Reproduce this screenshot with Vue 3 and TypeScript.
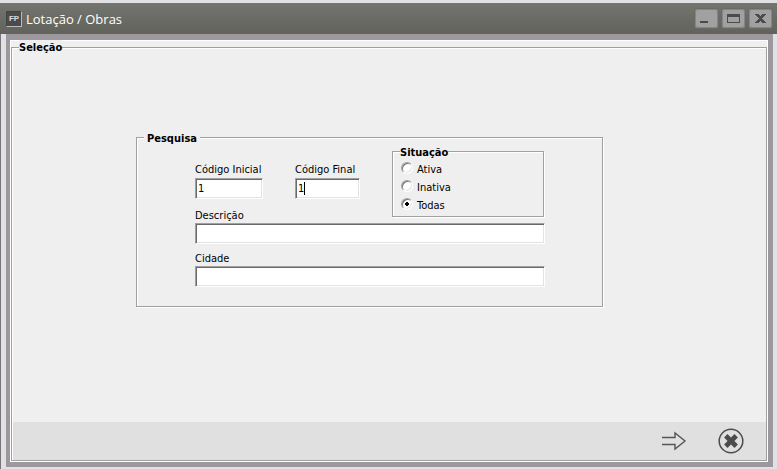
<script setup lang="ts">
import { ref } from 'vue'

type Situation = 'Ativa' | 'Inativa' | 'Todas'

const situations: Situation[] = ['Ativa', 'Inativa', 'Todas']
const situation = ref<Situation>('Todas')
const firstCode = ref('1')
const lastCode = ref('1')
const description = ref('')
const city = ref('')
</script>

<template>
  <div class="window">
    <header class="titlebar">
      <span class="app-icon">FP</span>
      <h1>Lotação / Obras</h1>
      <div class="controls">
        <button type="button" aria-label="Minimizar">
          <svg width="23" height="19" shape-rendering="crispEdges"><path d="M5 12h8v2H5z" /></svg>
        </button>
        <button type="button" aria-label="Maximizar">
          <svg width="23" height="19" shape-rendering="crispEdges"><path fill-rule="evenodd" d="M5 5h13v9H5zM6 8v5h11V8z" /></svg>
        </button>
        <button type="button" aria-label="Fechar">
          <svg width="23" height="19" shape-rendering="crispEdges"><path d="M6 5h4v1h1v1h1V6h1V5h4v1h-1v1h-1v1h-1v1h-1v1h1v1h1v1h1v1h1v1h-4v-1h-1v-1h-1v1h-1v1H6v-1h1v-1h1v-1h1v-1h1V9H9V8H8V7H7V6H6z" /></svg>
        </button>
      </div>
    </header>

    <div class="edge">
      <main class="frame">
        <fieldset class="group selection">
          <legend>Seleção</legend>
          <form class="body" @submit.prevent>
            <fieldset class="group search">
              <legend>Pesquisa</legend>
              <div class="grid">
                <div class="left">
                  <div class="codes">
                    <div class="field first">
                      <label for="first-code">Código Inicial</label>
                      <input id="first-code" v-model="firstCode" type="text" />
                    </div>
                    <div class="field last">
                      <label for="last-code">Código Final</label>
                      <input id="last-code" v-model="lastCode" type="text" />
                      <span class="caret"></span>
                    </div>
                  </div>
                  <label for="description">Descrição</label>
                </div>
                <fieldset class="group situation">
                  <legend>Situação</legend>
                  <label v-for="item in situations" :key="item" class="option">
                    <input v-model="situation" type="radio" name="situation" :value="item" />
                    <span>{{ item }}</span>
                  </label>
                </fieldset>
                <input id="description" v-model="description" class="wide" type="text" />
                <label for="city" class="city-label">Cidade</label>
                <input id="city" v-model="city" class="wide" type="text" />
              </div>
            </fieldset>
          </form>
          <footer class="actions">
            <button type="button" aria-label="Avançar">
              <svg width="26" height="26" viewBox="0 0 26 26" fill="none" stroke="#555" stroke-width="1.4">
                <path d="M1 9.500h13V5l10 8-10 8v-4.500H1" />
              </svg>
            </button>
            <button type="button" aria-label="Cancelar">
              <svg width="26" height="26" viewBox="0 0 26 26" fill="none" stroke="#4c4c4c">
                <circle cx="13" cy="13" r="11.800" stroke-width="1.500" />
                <path d="M7.800 7.800l10.400 10.400M18.200 7.800L7.800 18.200" stroke-width="4.800" />
              </svg>
            </button>
          </footer>
        </fieldset>
      </main>
    </div>
  </div>
</template>

<style>
body {
  background: #e2e0e2;
}
</style>

<style scoped>
* {
  box-sizing: border-box;
}

.window {
  display: flex;
  flex-direction: column;
  min-height: 100vh;
  padding-top: 3px;
  font: 11px/13px "DejaVu Sans Condensed", Tahoma, sans-serif;
  color: #000;
}

.titlebar {
  display: flex;
  align-items: center;
  gap: 4px;
  height: 31px;
  padding: 0 5px 0 6px;
  background: linear-gradient(#73756f, #61625b);
}

.app-icon {
  width: 16px;
  height: 16px;
  border: 1px solid #444;
  border-right-color: #bbb;
  border-bottom-color: #bbb;
  background: #4b4b4d;
  color: #ddd;
  font: bold 8px/14px "Liberation Sans", sans-serif;
  text-align: center;
}

h1 {
  flex: 1;
  margin: 0;
  color: #fff;
  font: 13px/18px "Open Sans", sans-serif;
}

.controls {
  display: flex;
  gap: 4px;
}

button {
  display: block;
  padding: 0;
  border: 0;
  background: none;
}

.controls button {
  width: 23px;
  height: 19px;
  border-radius: 3px;
  background: #a1a1a1;
  box-shadow: inset 0 0 0 1px #858585, 0 0 0 1px #6a6b66;
  fill: #4b4b4b;
}

svg {
  display: block;
}

.edge {
  display: flex;
  flex: 1;
  padding: 0 4px 2px 5px;
  border-left: 1px solid #77747a;
}

.frame {
  display: flex;
  flex: 1;
  border: solid #9c989e;
  border-width: 6px 5px 5px 4px;
  background: #efefef;
  box-shadow: inset 0 0 0 1px #fff;
}

.group {
  min-width: 0;
  margin: 0;
  padding: 0;
  border: 1px solid #a0a0a0;
  box-shadow: 1px 1px 0 #fff, inset 1px 1px 0 #fff;
}

legend {
  padding: 2px 0 0;
  background: #efefef;
  font-weight: bold;
}

.selection {
  flex: 1;
  display: flex;
  flex-direction: column;
  margin: 0 1px 1px;
}

.selection > legend {
  margin-left: 7px;
  padding-top: 1px;
}

.body {
  flex: 1;
  padding: 76px 163px 24px 124px;
}

.search > legend {
  margin-left: 7px;
  padding: 2px 3px 0;
}

.grid {
  display: grid;
  grid-template-columns: 1fr 153px;
  row-gap: 1px;
  padding: 0 57px 19px 58px;
}

.left {
  display: flex;
  flex-direction: column;
  gap: 10px;
  padding-top: 18px;
}

.codes {
  display: flex;
  gap: 32px;
}

.field {
  position: relative;
  display: flex;
  flex-direction: column;
  gap: 2px;
}

.first {
  width: 68px;
}

.last {
  width: 65px;
}

input[type="text"] {
  width: 100%;
  height: 21px;
  padding: 0 2px;
  border: 1px solid #a0a0a0;
  border-right-color: #fff;
  border-bottom-color: #fff;
  border-radius: 0;
  outline: 0;
  background: #fff;
  box-shadow: inset 1px 1px 0 #696969, inset -1px -1px 0 #e3e3e3;
  color: #000;
  font: inherit;
}

.caret {
  position: absolute;
  left: 9px;
  bottom: 4px;
  width: 1px;
  height: 13px;
  background: #000;
}

.situation {
  align-self: start;
  margin: -1px 1px 0 0;
  padding: 1px 8px 2px;
}

.situation > legend {
  margin-left: -1px;
}

.option {
  display: flex;
  align-items: center;
  gap: 4px;
  height: 18px;
}

.option input {
  width: 12px;
  height: 12px;
  margin: 0 0 2px;
  appearance: none;
  border: 1px solid #a0a0a0;
  border-right-color: #fff;
  border-bottom-color: #fff;
  border-radius: 50%;
  background: #fff;
  box-shadow: inset 1px 1px 0 #777, inset -1px -1px 0 #e3e3e3;
}

.option input:checked {
  background: radial-gradient(circle at center, #000 1px, #000 2px, #fff 2px);
}

.wide,
.city-label {
  grid-column: 1 / -1;
}

.city-label {
  margin-top: 7px;
}

.actions {
  display: flex;
  justify-content: flex-end;
  align-items: center;
  gap: 31px;
  height: 38px;
  margin-left: 1px;
  padding-right: 22px;
  background: #e0e0e0;
}
</style>
